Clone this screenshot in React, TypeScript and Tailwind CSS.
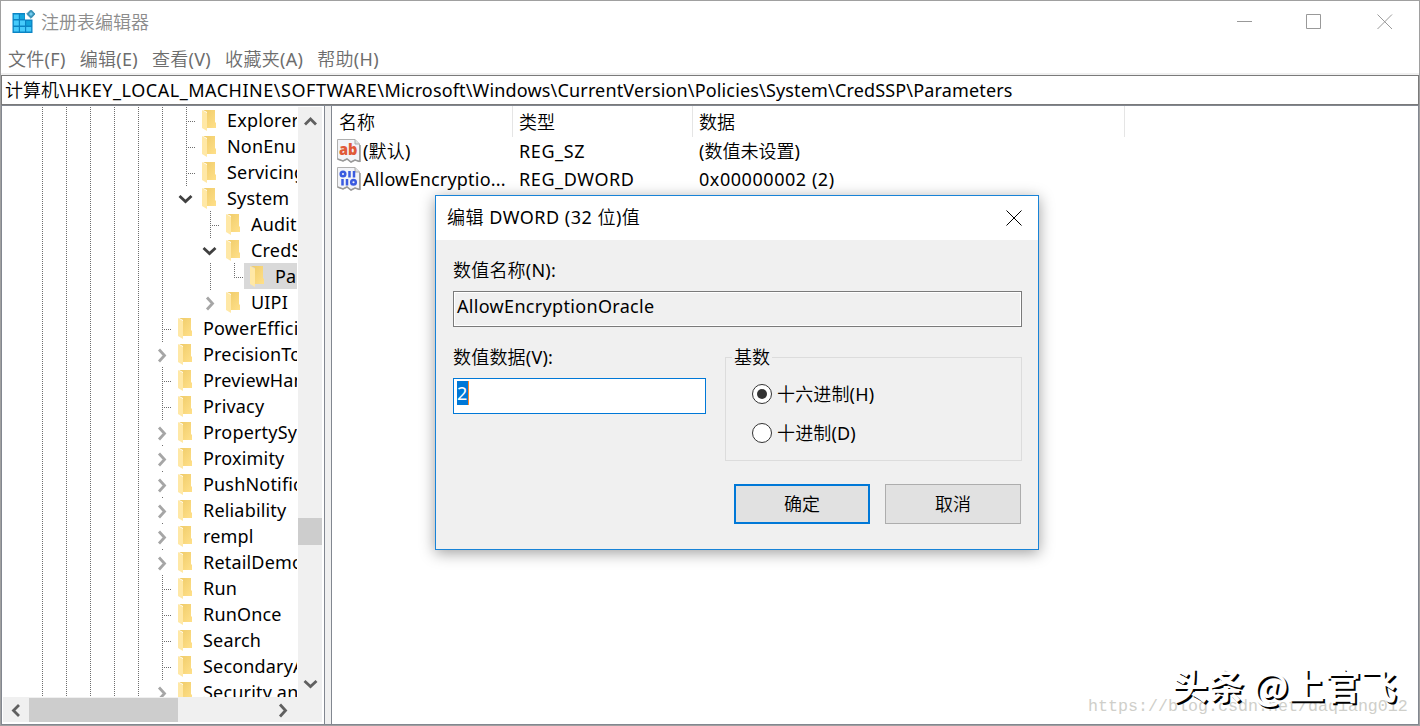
import type { ReactNode } from 'react'
import { clsx } from 'clsx'

type TreeRow = {
  name: string
  // one entry per ancestor column, true where the guide line runs through
  guides: boolean[]
  node: 'line' | 'end' | 'open' | 'closed'
  selected?: boolean
}

const ROOT = [true, true, true, true, true]
const POLICY = [...ROOT, true]
const SYSTEM = [...POLICY, false]

const rows: TreeRow[] = [
  { name: 'Explorer', guides: POLICY, node: 'line' },
  { name: 'NonEnum', guides: POLICY, node: 'line' },
  { name: 'Servicing', guides: POLICY, node: 'line' },
  { name: 'System', guides: POLICY, node: 'open' },
  { name: 'Audit', guides: SYSTEM, node: 'line' },
  { name: 'CredSSP', guides: SYSTEM, node: 'open' },
  { name: 'Parameters', guides: [...SYSTEM, true], node: 'end', selected: true },
  { name: 'UIPI', guides: SYSTEM, node: 'closed' },
  { name: 'PowerEfficiency', guides: ROOT, node: 'line' },
  { name: 'PrecisionTouchPad', guides: ROOT, node: 'closed' },
  { name: 'PreviewHandlers', guides: ROOT, node: 'line' },
  { name: 'Privacy', guides: ROOT, node: 'line' },
  { name: 'PropertySystem', guides: ROOT, node: 'closed' },
  { name: 'Proximity', guides: ROOT, node: 'closed' },
  { name: 'PushNotifications', guides: ROOT, node: 'closed' },
  { name: 'Reliability', guides: ROOT, node: 'closed' },
  { name: 'rempl', guides: ROOT, node: 'closed' },
  { name: 'RetailDemo', guides: ROOT, node: 'closed' },
  { name: 'Run', guides: ROOT, node: 'line' },
  { name: 'RunOnce', guides: ROOT, node: 'line' },
  { name: 'Search', guides: ROOT, node: 'line' },
  { name: 'SecondaryAuth', guides: ROOT, node: 'line' },
  { name: 'Security and', guides: ROOT, node: 'closed' },
]

const menus = ['文件(F)', '编辑(E)', '查看(V)', '收藏夹(A)', '帮助(H)']

function FolderIcon() {
  return (
    <svg viewBox="0 0 14 22" className="w-[14px] h-[22px] shrink-0">
      <defs>
        <linearGradient id="folder" x1="0" y1="0" x2="1" y2="1">
          <stop offset="0" stopColor="#efcb68" />
          <stop offset="1" stopColor="#ffe08a" />
        </linearGradient>
      </defs>
      <path d="M1 0H13V12L14 13V18H5V2Z" fill="url(#folder)" />
      <path d="M0 0L5 3V21L0 18Z" fill="#ffe8a6" />
    </svg>
  )
}

function Chevron({ dir, className }: { dir: 'up' | 'down' | 'left' | 'right'; className?: string }) {
  const paths = {
    up: 'M2 10.500L7.500 5L13 10.500',
    down: 'M1.500 5L7.500 10.500L13.500 5',
    left: 'M10 2L4.500 7.500L10 13',
    right: 'M5 1.500L10.500 7.500L5 13.500',
  }
  return (
    <svg viewBox="0 0 15 15" fill="none" stroke="currentColor" strokeWidth="2.8" className={clsx('w-[15px] h-[15px]', className)}>
      <path d={paths[dir]} />
    </svg>
  )
}

function RegeditIcon() {
  return (
    <svg viewBox="0 0 24 24" className="w-6 h-6">
      <path d="M1.500 3H14V9.500H21.500V23H1.500Z" fill="#0b84c4" />
      <path
        d="M2.800 4.500h5v4.500h-5zM2.800 10.500h5v5h-5zM2.800 17h5v4.500h-5zM9 17h5v4.500h-5zM15.200 17h5v4.500h-5zM9 10.500h5v5h-5z"
        fill="#46cbfb"
      />
      <path d="M9 4.500h4.500v4.500h-4.500zM15.200 11h5v4.500h-5z" fill="#12a5dc" />
      <path d="M20 -.3L24 4L20 8.300L15.700 4Z" fill="#3a93b8" stroke="#3a93b8" />
      <path d="M20 2L22 4L20 6.100L18 4Z" fill="#74cdf0" />
    </svg>
  )
}

function ValueIcon({ kind }: { kind: 'string' | 'binary' }) {
  return (
    <svg viewBox="0 0 24 24" className="w-6 h-6 shrink-0">
      <path d="M.5 .5H18L22.500 5V22.500L18 21L14 23L10 20L6 22L.5 20Z" fill="#f3f4f8" stroke="#b0b0b0" />
      <path d="M23 6V23M.5 20L6 22L10 20L14 23L18 21L22.500 22.500" fill="none" stroke="#999" strokeWidth="1.500" />
      <path d="M18 .5V5H22.500" fill="#ddd" stroke="#aaa" />
      {kind === 'string' ? (
        <text x="2" y="16" fontSize="15" fontWeight="900" textLength="18.500" lengthAdjust="spacingAndGlyphs" fill="#e05a38">
          ab
        </text>
      ) : (
        <g fill="none" stroke="#3a5be0" strokeWidth="2.500">
          <circle cx="6" cy="7" r="2.300" />
          <path d="M12.500 4V10.400M17 4V10.400M5.500 12V18.500M10 12V18.500" />
          <circle cx="16.500" cy="15.300" r="2.300" />
        </g>
      )}
    </svg>
  )
}

const dotsV = 'bg-[repeating-linear-gradient(180deg,#6e6e6e_0_1px,transparent_1px_2px)]'
const dotsH = 'bg-[repeating-linear-gradient(90deg,#6e6e6e_0_1px,transparent_1px_2px)]'

function NodeCell({ node }: { node: TreeRow['node'] }) {
  if (node === 'open' || node === 'closed') {
    return (
      <div className="w-[22px] shrink-0 flex flex-col">
        <div className="w-px h-px ml-3 bg-[#6e6e6e]" />
        <Chevron
          dir={node === 'open' ? 'down' : 'right'}
          className={clsx('ml-1', node === 'open' ? 'mt-[5px] text-[#404040]' : 'mt-1.5 text-[#a6a6a6]')}
        />
      </div>
    )
  }
  return (
    <div className="w-[22px] shrink-0 pl-3 flex">
      <div className={clsx('w-px', node === 'end' ? 'h-[15px]' : 'h-full', dotsV)} />
      <div className={clsx('w-[9px] h-px mt-[14px] ml-px', dotsH)} />
    </div>
  )
}

function TreeItem({ row }: { row: TreeRow }) {
  return (
    <div className="flex h-[26px] shrink-0 pl-7">
      {row.guides.map((on, i) => (
        <div key={i} className="w-6 shrink-0 pl-3">
          {on && <div className={clsx('w-px h-full', dotsV)} />}
        </div>
      ))}
      <NodeCell node={row.node} />
      <div className={clsx('flex items-start grow pl-1.5 pt-[3px]', row.selected && 'bg-[#d9d9d9]')}>
        <FolderIcon />
        <span className="pl-[11px] -mt-px leading-[22px] tracking-[0.18px] whitespace-nowrap">{row.name}</span>
      </div>
    </div>
  )
}

function Tree() {
  return (
    <div className="w-[323px] shrink-0 flex flex-col bg-white border-r border-[#828790]">
      <div className="flex h-[591px] pt-px">
        <div className="w-[295px] h-[590px] overflow-hidden flex flex-col">
          {rows.map((row) => (
            <TreeItem key={row.name} row={row} />
          ))}
        </div>
        <div className="w-6 ml-px bg-[#f0f0f0] flex flex-col items-center">
          <Chevron dir="up" className="mt-[7px] text-[#606060]" />
          <div className="w-6 h-[27px] mt-[389px] bg-[#cdcdcd]" />
          <Chevron dir="down" className="mt-[131px] text-[#606060]" />
        </div>
      </div>
      <div className="h-[25px] w-[319px] ml-px pt-px bg-[#f0f0f0] flex items-center">
        <Chevron dir="left" className="ml-[6px] text-[#606060]" />
        <div className="w-[149px] h-6 ml-[5px] bg-[#cdcdcd]" />
        <Chevron dir="right" className="ml-[97px] text-[#606060]" />
      </div>
    </div>
  )
}

function ValueList() {
  const values = [
    { kind: 'string' as const, name: '(默认)', type: 'REG_SZ', data: '(数值未设置)' },
    { kind: 'binary' as const, name: 'AllowEncryptio...', type: 'REG_DWORD', data: '0x00000002 (2)' },
  ]
  return (
    <div className="grow bg-white border-l border-[#828790]">
      <div className="flex h-[31px] leading-[32px]">
        <div className="w-[181px] pl-[7px] border-r border-[#e5e5e5]">名称</div>
        <div className="w-[180px] pl-[6px] border-r border-[#e5e5e5]">类型</div>
        <div className="w-[432px] pl-[6px] border-r border-[#e5e5e5]">数据</div>
      </div>
      {values.map((v) => (
        <div key={v.type} className="flex h-7 leading-[28px] whitespace-nowrap">
          <div className="w-[181px] pl-[5px] flex items-center">
            <ValueIcon kind={v.kind} />
            <span className="pl-[2px] tracking-[0.2px]">{v.name}</span>
          </div>
          <div className="w-[180px] pl-[6px] tracking-[0.6px]">{v.type}</div>
          <div className={clsx('pl-[6px]', v.kind === 'binary' && 'tracking-[0.55px]')}>{v.data}</div>
        </div>
      ))}
    </div>
  )
}

function Radio({ checked, children }: { checked?: boolean; children: ReactNode }) {
  return (
    <label className="flex items-center h-[39px] gap-[5px]">
      <span className="w-5 h-5 rounded-full border border-[#333] bg-white flex items-center justify-center">
        {checked && <span className="w-[10px] h-[10px] rounded-full bg-[#333]" />}
      </span>
      <span className="pt-[2px] tracking-[0.15px]">{children}</span>
    </label>
  )
}

function EditDialog() {
  return (
    <div className="absolute left-[434px] top-[194px] w-[604px] h-[355px] border border-[#1883d7] bg-[#f0f0f0] shadow-[0_3px_14px_rgba(0,0,0,0.38)]">
      <div className="h-11 bg-white flex items-center justify-between pl-[11px] pr-4">
        <span className="pb-[2px] tracking-[0.5px]">编辑 DWORD (32 位)值</span>
        <svg viewBox="0 0 16 16" className="w-4 h-4 mb-px" stroke="#000" strokeWidth="1">
          <path d="M.5 .5L15.500 15.500M15.500 .5L.5 15.500" />
        </svg>
      </div>
      <div className="pl-[17px] pr-4">
        <div className="h-[51px] pt-[17px] leading-[26px] tracking-[0.2px]">数值名称(N):</div>
        <div className="h-9 border border-[#7a7a7a] shadow-[inset_0_0_0_1px_white] pl-[3px] leading-[28px] tracking-[0.32px]">
          AllowEncryptionOracle
        </div>
        <div className="flex">
          <div className="w-[253px]">
            <div className="h-[51px] pt-[17px] leading-[26px] tracking-[0.2px]">数值数据(V):</div>
            <div className="h-9 border border-[#0078d7] bg-white pl-[3px] pt-[2px]">
              <div className="h-6 w-3 border-r border-[#ff8728] bg-[#0078d7] text-white leading-[25px]">2</div>
            </div>
          </div>
          <fieldset className="ml-[19px] mt-[17px] w-[297px] h-[117px] border border-[#dcdcdc] pl-[26px]">
            <legend className="-ml-[20px] px-[2px] leading-[26px]">基数</legend>
            <div className="pt-[4px]">
              <Radio checked>十六进制(H)</Radio>
              <Radio>十进制(D)</Radio>
            </div>
          </fieldset>
        </div>
        <div className="flex justify-end gap-[15px] pr-px mt-[23px]">
          <button className="w-[136px] h-10 border-2 border-[#0078d7] bg-[#e1e1e1]">确定</button>
          <button className="w-[136px] h-10 border border-[#adadad] bg-[#e1e1e1]">取消</button>
        </div>
      </div>
    </div>
  )
}

export default function App() {
  return (
    <div className="relative w-[1420px] h-[726px] overflow-hidden bg-white border border-[#a0a0a0] flex flex-col text-[18px] text-black font-['Noto_Sans','Noto_Sans_CJK_SC_DemiLight','Noto_Sans_CJK_SC_Light','Noto_Sans_CJK_SC',sans-serif]">
      <div className="h-[42px] flex items-center pl-[10px] pr-[26px] text-[#8c8c8c] font-light">
        <RegeditIcon />
        <span className="pl-[6px] pt-px grow">注册表编辑器</span>
        <svg viewBox="0 0 158 16" className="w-[158px] h-4" fill="none" stroke="#999">
          <path d="M2 7.500H17M71.500 .5H85.500V14.500H71.500ZM142.500 .5L157 15M157 .5L142.500 15" />
        </svg>
      </div>
      <div className="h-[30px] flex items-center gap-[14px] pl-[7px] pt-[2px] tracking-[0.3px] text-[#6d6d6d]">
        {menus.map((m) => (
          <span key={m}>{m}</span>
        ))}
      </div>
      <div className="h-[2px] bg-[#f0f0f0]" />
      <div className="h-[30px] border border-[#7a7a7a] pl-[3px] leading-[28px] whitespace-nowrap">
        计算机
        <span className="tracking-[0.53px]">\HKEY_LOCAL_MACHINE\SOFTWARE\</span>
        <span className="tracking-[0.16px]">Microsoft\Windows\CurrentVersion\Policies\System\CredSSP\Parameters</span>
      </div>
      <div className="h-[620px] flex border border-[#828790] bg-[#f0f0f0]">
        <Tree />
        <div className="w-[6px] shrink-0" />
        <ValueList />
      </div>
      <EditDialog />
      <div className="absolute left-[1087px] top-[694px] text-[16.66px] leading-6 text-[#cfcfca] font-['Liberation_Mono',monospace]">
        https://blog.csdn.net/daqiang012
      </div>
      <div className="absolute left-[1171px] top-[661px] text-[36px] leading-[44px] font-bold text-white [text-shadow:2px_2px_0_#000] whitespace-nowrap font-['Noto_Sans_CJK_SC',sans-serif]">
        头条 @上官飞
      </div>
    </div>
  )
}
